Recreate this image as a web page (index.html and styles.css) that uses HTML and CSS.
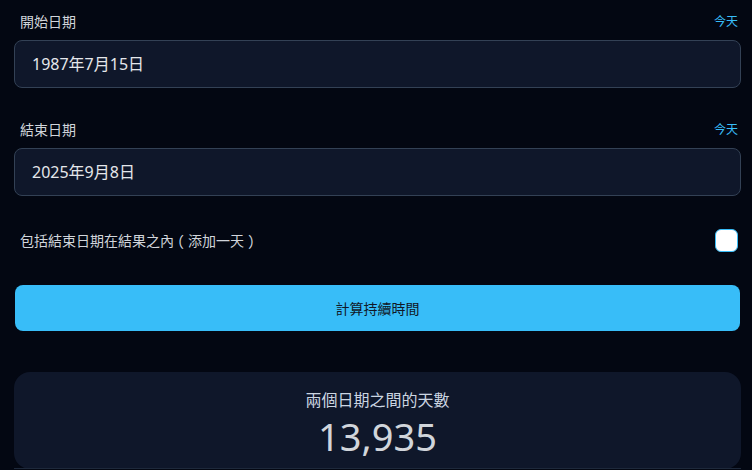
FILE: index.html
```html
<!DOCTYPE html>
<html lang="zh-Hant">
  <head>
    <meta charset="UTF-8" />
    <meta name="viewport" content="width=device-width, initial-scale=1.0" />
    <link rel="stylesheet" href="styles.css">
    <title>日期計算</title>
  </head>
  <body>
    <div class="wrapper">
      <div class="field">
        <div class="fieldHead">
          <label>開始日期</label>
          <a class="today">今天</a>
        </div>
        <div class="dateBox">1987年7月15日</div>
      </div>

      <div class="field">
        <div class="fieldHead">
          <label>結束日期</label>
          <a class="today">今天</a>
        </div>
        <div class="dateBox">2025年9月8日</div>
      </div>

      <div class="checkRow">
        <span class="checkText">包括結束日期在結果之內<span class="paren">（</span>添加一天<span class="paren">）</span></span>
        <div class="check"></div>
      </div>

      <button class="calc">計算持續時間</button>

      <div class="result">
        <div class="resultTitle">兩個日期之間的天數</div>
        <div class="resultNum">13,935</div>
        <div class="divider"></div>
      </div>
    </div>
  </body>
</html>
```

FILE: styles.css
```css
body {
  margin: 0;
  background-color: #030712;
  font-family: "Noto Sans", "Noto Sans CJK TC", sans-serif;
  color: #d1d5db;
}

.wrapper {
  display: flex;
  flex-direction: column;
  padding: 12px 11px 0 14px;
}

.field {
  margin-bottom: 32px;
}

.fieldHead {
  display: flex;
  justify-content: space-between;
  align-items: center;
  height: 18px;
  padding: 0 3px 0 6px;
  margin-bottom: 10px;
  font-size: 14px;
}

.today {
  color: #38bdf8;
  font-size: 12px;
}

.dateBox {
  height: 46px;
  line-height: 46px;
  padding: 0 17px;
  background-color: #0f172a;
  border: 1px solid #334155;
  border-radius: 8px;
  font-size: 16px;
  color: #e5e7eb;
}

.checkRow {
  display: flex;
  justify-content: space-between;
  align-items: center;
  height: 24px;
  padding: 0 3px 0 6px;
  margin-bottom: 33px;
  font-size: 14px;
}

.checkText {
  font-family: "Noto Sans CJK TC", sans-serif;
}

/* centred full-width brackets */
.paren {
  display: inline-block;
  width: 1em;
  text-align: center;
  font-feature-settings: "hwid";
}

.check {
  width: 21px;
  height: 21px;
  background: #fff;
  border: 1.5px solid #38bdf8;
  border-radius: 6px;
}

.calc {
  height: 46px;
  margin: 0 1px;
  border: none;
  border-radius: 8px;
  background-color: #38bdf8;
  color: #111827;
  font-family: inherit;
  font-size: 14px;
  margin-bottom: 41px;
}

.result {
  background-color: #0f172a;
  border-radius: 16px;
  padding-top: 16px;
  text-align: center;
}

.resultTitle {
  font-size: 16px;
  line-height: 24px;
  color: #cbd5e1;
}

.resultNum {
  font-size: 38px;
  line-height: 48px;
  color: #d1d5db;
}

.divider {
  height: 1px;
  background: #1e293b;
  margin-top: 8px;
}
```
